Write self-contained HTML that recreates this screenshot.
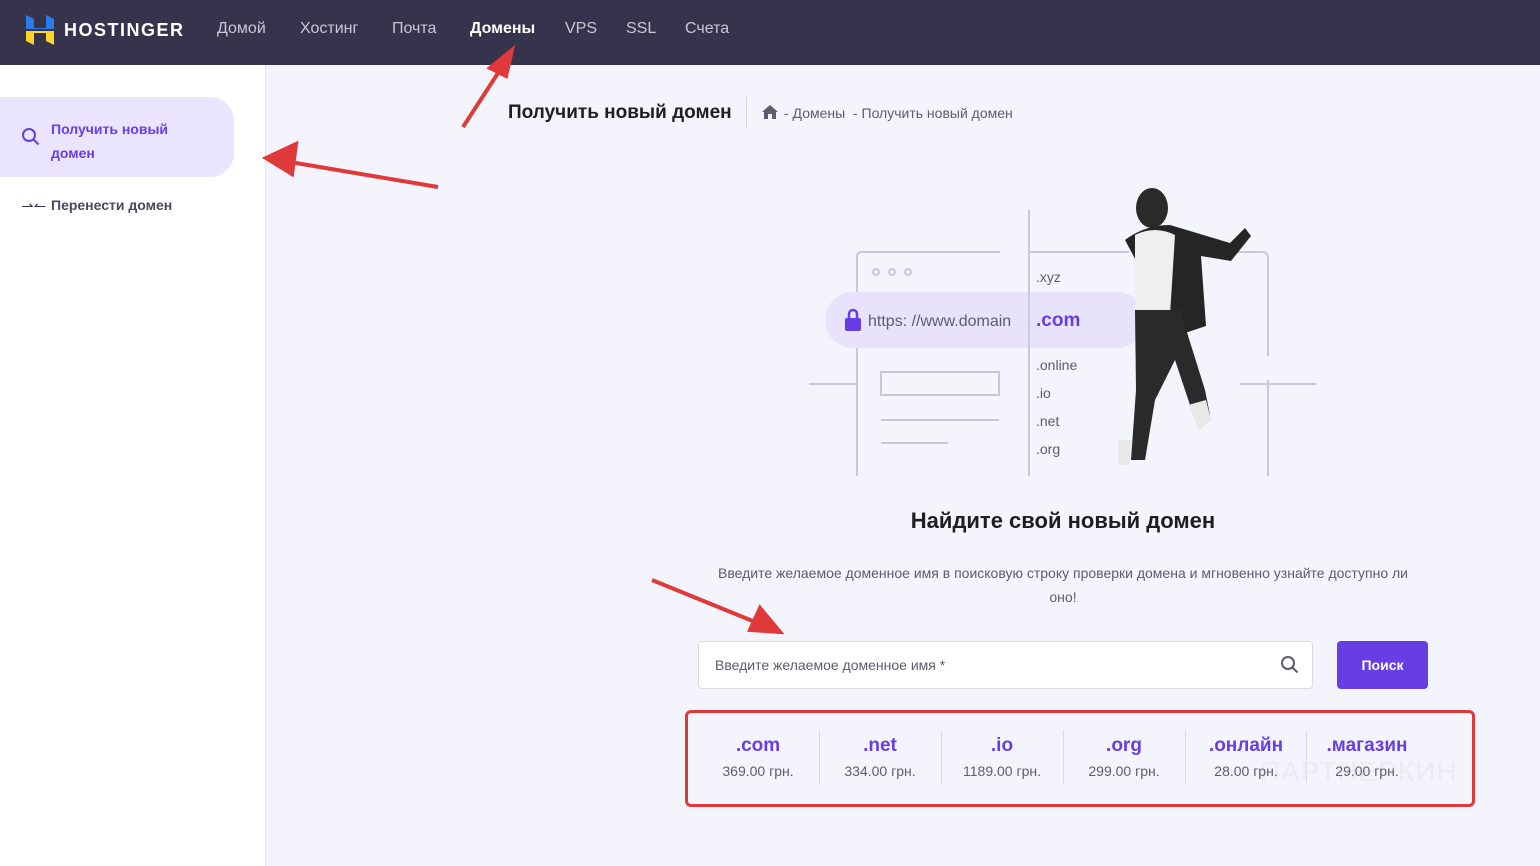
<!DOCTYPE html>
<html><head><meta charset="utf-8"><style>
*{margin:0;padding:0;box-sizing:border-box}
body{width:1540px;height:866px;overflow:hidden;font-family:"Liberation Sans",sans-serif;background:#f4f4fd;position:relative}
.hdr{position:absolute;left:0;top:0;width:1540px;height:65px;background:#36344d}
.hdr .logo{position:absolute;left:64px;top:20px;color:#fff;font-weight:bold;font-size:18px;letter-spacing:1.5px}
.nav{position:absolute;top:20px;color:#c9c8d6;font-size:16px}
.side{position:absolute;left:0;top:65px;width:266px;height:801px;background:#fff;border-right:1px solid #e4e4ea}
.act{position:absolute;left:0;top:97px;width:234px;height:80px;background:#ebe4ff;border-radius:0 24px 24px 0}
.t{position:absolute;white-space:nowrap}
.tld{position:absolute;top:735px;width:122px;text-align:center}
.tld b{display:block;color:#673de6;font-size:19px;font-weight:bold}
.tld span{display:block;color:#5c5c6e;font-size:14px;margin-top:6px}
.sep{position:absolute;top:730px;width:1px;height:54px;background:#dcdce6}
</style></head><body>
<div class="hdr">
<svg style="position:absolute;left:26px;top:15px" width="28" height="30" viewBox="0 0 28 30"><path d="M0 0l8 4v9h12V0l8 4v10H0z" fill="#2b7ce8"/><path d="M0 16h28v14l-8-4v-8H8v12l-8-4z" fill="#fcd22d"/></svg>
<div class="logo">HOSTINGER</div>
<div class="nav" style="left:217px">Домой</div>
<div class="nav" style="left:300px">Хостинг</div>
<div class="nav" style="left:392px">Почта</div>
<div class="nav" style="left:470px;color:#fff;font-weight:bold">Домены</div>
<div class="nav" style="left:565px">VPS</div>
<div class="nav" style="left:626px">SSL</div>
<div class="nav" style="left:685px">Счета</div>
</div>
<div class="side"></div>
<div class="act"></div>
<svg style="position:absolute;left:21px;top:127px" width="20" height="20" viewBox="0 0 20 20"><circle cx="8" cy="8" r="6" fill="none" stroke="#673de6" stroke-width="2"/><path d="M12.5 12.5l5 5" stroke="#673de6" stroke-width="2"/></svg>
<div class="t" style="left:51px;top:117px;color:#673de6;font-weight:bold;font-size:14px;line-height:24px">Получить новый<br>домен</div>
<div class="t" style="left:21px;top:197px;color:#36344d;font-size:15px">⇀↼</div>
<div class="t" style="left:51px;top:197px;color:#4a4a5e;font-weight:bold;font-size:14px">Перенести домен</div>
<div class="t" style="left:508px;top:102px;color:#1d1e20;font-weight:bold;font-size:19px">Получить новый домен</div>
<div style="position:absolute;left:746px;top:97px;width:1px;height:32px;background:#d8d8e0"></div>
<svg style="position:absolute;left:762px;top:105px" width="16" height="14" viewBox="0 0 16 14"><path d="M8 0L0 7h2v7h4V9h4v5h4V7h2z" fill="#5c5c6e"/></svg>
<div class="t" style="left:784px;top:105px;color:#5c5c6e;font-size:14px">- Домены&nbsp; - Получить новый домен</div>
<svg style="position:absolute;left:800px;top:180px" width="530" height="300" viewBox="0 0 530 300">
<g stroke="#c8c8dc" stroke-width="2" fill="none">
<path d="M57 296V77q0-5 5-5h138"/><path d="M229 30v266"/><path d="M229 72h100"/><path d="M400 72h62q6 0 6 6v98"/><path d="M468 200v96"/>
<path d="M9 204h48"/><path d="M440 204h76"/>
<rect x="81" y="192" width="118" height="23"/><path d="M81 240h118M81 263h67"/>
<circle cx="76" cy="92" r="3"/><circle cx="92" cy="92" r="3"/><circle cx="108" cy="92" r="3"/>
</g>
<rect x="25" y="112" width="320" height="56" rx="28" fill="#e8e2fb"/>
<path d="M229 112v56" stroke="#c8c8dc" stroke-width="2"/>
<rect x="45" y="138" width="16" height="13" rx="2" fill="#673de6"/><path d="M49 138v-4a4 4 0 0 1 8 0v4" stroke="#673de6" stroke-width="2.5" fill="none"/>
<text x="68" y="146" font-size="16" fill="#5c5c6e" font-family="Liberation Sans">https: //www.domain</text>
<text x="236" y="146" font-size="19" font-weight="bold" fill="#673de6" font-family="Liberation Sans">.com</text>
<g font-size="14" fill="#5c5c6e" font-family="Liberation Sans"><text x="236" y="102">.xyz</text><text x="236" y="190">.online</text><text x="236" y="218">.io</text><text x="236" y="246">.net</text><text x="236" y="274">.org</text></g>
<ellipse cx="352" cy="28" rx="16" ry="20" fill="#2a2a2a"/>
<path d="M325 60q20-15 45-15l60 18 15-15 6 8-20 25-30-5 5 70-30 10z" fill="#252525"/>
<path d="M335 55q20-10 40 0l-5 80h-35z" fill="#efefef"/>
<path d="M335 130h45l25 80 5 25-15 5-20-60-20 40-10 60h-14l5-70z" fill="#2a2a2a"/>
<path d="M388 225l18-5 5 20-12 10z" fill="#e8e8e8"/><path d="M318 260h14l-3 25h-10z" fill="#e8e8e8"/>
</svg>
<div class="t" style="left:0;width:2126px;text-align:center;top:508px;color:#1d1e20;font-weight:bold;font-size:22px">Найдите свой новый домен</div>
<div class="t" style="left:706px;width:714px;text-align:center;top:561px;color:#5c5c6e;font-size:14px;line-height:24px;white-space:normal">Введите желаемое доменное имя в поисковую строку проверки домена и мгновенно узнайте доступно ли оно!</div>
<div style="position:absolute;left:698px;top:641px;width:615px;height:48px;background:#fff;border:1px solid #dadce0;border-radius:4px"></div>
<div class="t" style="left:715px;top:657px;color:#5c5c6e;font-size:14px">Введите желаемое доменное имя *</div>
<svg style="position:absolute;left:1280px;top:655px" width="20" height="20" viewBox="0 0 20 20"><circle cx="8" cy="8" r="6" fill="none" stroke="#5c5c6e" stroke-width="2"/><path d="M12.5 12.5l5 5" stroke="#5c5c6e" stroke-width="2"/></svg>
<div style="position:absolute;left:1337px;top:641px;width:91px;height:48px;background:#673de6;border-radius:4px;color:#fff;font-weight:bold;font-size:14px;text-align:center;line-height:48px">Поиск</div>
<div style="position:absolute;left:685px;top:710px;width:790px;height:97px;border:3px solid #e0393a;border-radius:6px"></div>
<div class="t" style="left:1260px;top:756px;color:#ebebf2;font-size:28px;letter-spacing:1px">ПАРТНЕРКИН</div>
<div class="tld" style="left:697px"><b>.com</b><span>369.00 грн.</span></div>
<div class="sep" style="left:819px"></div>
<div class="tld" style="left:819px"><b>.net</b><span>334.00 грн.</span></div>
<div class="sep" style="left:941px"></div>
<div class="tld" style="left:941px"><b>.io</b><span>1189.00 грн.</span></div>
<div class="sep" style="left:1063px"></div>
<div class="tld" style="left:1063px"><b>.org</b><span>299.00 грн.</span></div>
<div class="sep" style="left:1185px"></div>
<div class="tld" style="left:1185px"><b>.онлайн</b><span>28.00 грн.</span></div>
<div class="sep" style="left:1306px"></div>
<div class="tld" style="left:1306px"><b>.магазин</b><span>29.00 грн.</span></div>
<svg style="position:absolute;left:0;top:0" width="1540" height="866"><g stroke="#e0393a" stroke-width="4" fill="#e0393a">
<path d="M463 127L500 70"/><path d="M512 50l-22 18 16 8z"/>
<path d="M438 187L290 162"/><path d="M266 158l30-14-4 30z"/>
<path d="M652 580L760 624"/><path d="M780 632l-30-2 10-22z"/></g></svg>
</body></html>
